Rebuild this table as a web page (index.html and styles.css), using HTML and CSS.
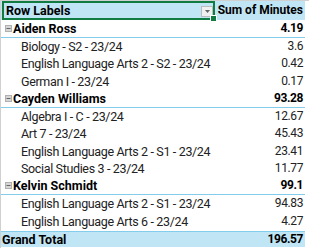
FILE: index.html
```html
<!DOCTYPE html>
<html>
<head>
<meta charset="utf-8">
<link rel="stylesheet" href="styles.css">
</head>
<body>
<div class="sheet">
  <div class="pivot">
    <div class="row head">
      <div class="cell label sel">
        <span>Row Labels</span>
        <span class="filter"><svg width="5" height="3" viewBox="0 0 5 3"><path d="M0 0H5L2.5 3Z" fill="#666"/></svg></span>
        <span class="handle"></span>
      </div>
      <div class="cell num">Sum of Minutes</div>
    </div>

    <div class="row group">
      <div class="cell label"><svg class="tog" width="7" height="7" viewBox="0 0 7 7"><rect x="0.5" y="0.5" width="6" height="6" fill="#d6d6d6" stroke="#b0b0b0"/><path d="M1.5 3.5H5.5" stroke="#666"/></svg>Aiden Ross</div>
      <div class="cell num">4.19</div>
    </div>
    <div class="row item"><div class="cell label">Biology - S2 - 23/24</div><div class="cell num">3.6</div></div>
    <div class="row item"><div class="cell label">English Language Arts 2 - S2 - 23/24</div><div class="cell num">0.42</div></div>
    <div class="row item"><div class="cell label">German I - 23/24</div><div class="cell num">0.17</div></div>

    <div class="row group">
      <div class="cell label"><svg class="tog" width="7" height="7" viewBox="0 0 7 7"><rect x="0.5" y="0.5" width="6" height="6" fill="#d6d6d6" stroke="#b0b0b0"/><path d="M1.5 3.5H5.5" stroke="#666"/></svg>Cayden Williams</div>
      <div class="cell num">93.28</div>
    </div>
    <div class="row item"><div class="cell label">Algebra I - C - 23/24</div><div class="cell num">12.67</div></div>
    <div class="row item"><div class="cell label">Art 7 - 23/24</div><div class="cell num">45.43</div></div>
    <div class="row item"><div class="cell label">English Language Arts 2 - S1 - 23/24</div><div class="cell num">23.41</div></div>
    <div class="row item"><div class="cell label">Social Studies 3 - 23/24</div><div class="cell num">11.77</div></div>

    <div class="row group">
      <div class="cell label"><svg class="tog" width="7" height="7" viewBox="0 0 7 7"><rect x="0.5" y="0.5" width="6" height="6" fill="#d6d6d6" stroke="#b0b0b0"/><path d="M1.5 3.5H5.5" stroke="#666"/></svg>Kelvin Schmidt</div>
      <div class="cell num">99.1</div>
    </div>
    <div class="row item"><div class="cell label">English Language Arts 2 - S1 - 23/24</div><div class="cell num">94.83</div></div>
    <div class="row item"><div class="cell label">English Language Arts 6 - 23/24</div><div class="cell num">4.27</div></div>

    <div class="row total">
      <div class="cell label">Grand Total</div>
      <div class="cell num">196.57</div>
    </div>
  </div>
</div>
</body>
</html>
```

FILE: styles.css
```css
html, body {
  margin: 0;
  padding: 0;
  background: #ffffff;
}

.sheet {
  width: 309px;
  height: 248px;
  box-sizing: border-box;
  border-left: 1px solid #d0d0d0;
  border-top: 1px solid #d0d0d0;
  font-family: Roboto, "Liberation Sans", sans-serif;
  font-size: 12.5px;
  color: #1a1a1a;
}

.pivot {
  width: 304px;
  display: flex;
  flex-direction: column;
}

.row {
  display: grid;
  grid-template-columns: 213px 91px;
  height: 17.5px;
  box-sizing: border-box;
  align-items: center;
}

.cell {
  white-space: nowrap;
  line-height: 15px;
}

.num {
  text-align: right;
  padding-right: 2px;
  font-size: 12px;
  letter-spacing: -0.4px;
}

.head {
  height: 19px;
  background: #c0e6f5;
  font-weight: 700;
  color: #000;
  font-size: 12.5px;
}

.head .cell {
  height: 19px;
  display: flex;
  align-items: center;
}

.head .num {
  justify-content: flex-end;
  font-size: 12px;
  letter-spacing: 0;
}

.sel {
  position: relative;
  box-sizing: border-box;
  border: 2px solid #107c41;
  padding-left: 2px;
  margin-left: 1px;
  width: 213px;
}

.filter {
  position: absolute;
  right: 0px;
  top: 3px;
  width: 12px;
  height: 11px;
  box-sizing: border-box;
  border: 1px solid #bcbcbc;
  background: #f0f0f0;
  display: flex;
  align-items: center;
  justify-content: center;
}

.handle {
  position: absolute;
  right: -4px;
  bottom: -4px;
  width: 5px;
  height: 5px;
  background: #107c41;
  border: 1px solid #fff;
}

.group {
  font-weight: 700;
  font-size: 12.5px;
  color: #000;
  border-bottom: 1px solid #83cceb;
}

.group .label {
  display: flex;
  align-items: center;
  padding-left: 4px;
}

.tog {
  margin-right: 1px;
  display: block;
}

.item .label {
  padding-left: 20px;
  letter-spacing: -0.35px;
}

.item {
  color: #222;
}

.total {
  margin-top: 0.5px;
  height: 16px;
  background: #c0e6f5;
  border-top: 1px solid #83cceb;
  font-weight: 700;
  color: #000;
  font-size: 12.5px;
}

.total .label {
  padding-left: 1px;
}
```
